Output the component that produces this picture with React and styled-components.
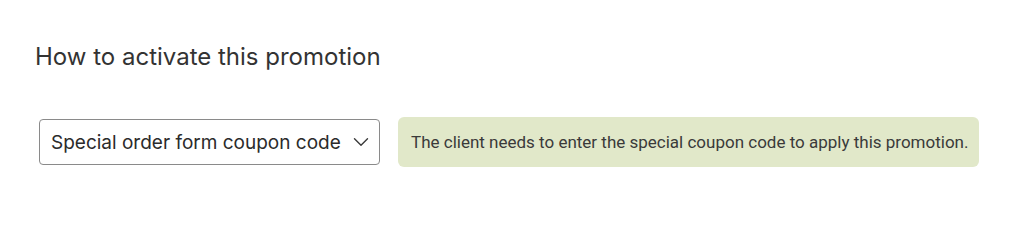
import React from "react";
import styled, { createGlobalStyle } from "styled-components";

const Global = createGlobalStyle`
  html, body { margin: 0; padding: 0; background: #ffffff; }
  body { font-family: Inter, "Noto Sans", sans-serif; }
`;

const Page = styled.div`
  padding: 42px 0 0 35px;
  height: 212px;
  box-sizing: border-box;
`;

const Heading = styled.h2`
  margin: 0;
  font-family: Inter, "Noto Sans", sans-serif;
  font-weight: 400;
  font-size: 24px;
  line-height: 30px;
  color: #333333;
`;

const Row = styled.div`
  display: flex;
  align-items: center;
  gap: 18px;
  margin-top: 45px;
  padding-left: 4px;
`;

const Select = styled.div`
  width: 341px;
  height: 46px;
  box-sizing: border-box;
  border: 1px solid #8a8a8a;
  border-radius: 4px;
  display: flex;
  align-items: center;
  justify-content: space-between;
  padding: 0 10px 0 11px;
  font-family: Inter, "Noto Sans", sans-serif;
  font-size: 19px;
  color: #2b2b2b;
  white-space: nowrap;
`;

const Chevron = styled.svg`
  width: 16px;
  height: 10px;
  flex: none;
`;

const Note = styled.div`
  width: 581px;
  height: 50px;
  box-sizing: border-box;
  background: #e1e8c9;
  border-radius: 6px;
  display: flex;
  align-items: center;
  padding: 0 13px;
  font-family: Roboto, "Noto Sans", sans-serif;
  font-size: 17px;
  color: #3a3a3a;
  white-space: nowrap;
`;

export default function App() {
  return (
    <>
      <Global />
      <Page>
        <Heading>How to activate this promotion</Heading>
        <Row>
          <Select>
            <span>Special order form coupon code</span>
            <Chevron viewBox="0 0 16 10" fill="none" stroke="#3a3a3a" strokeWidth="1.4" strokeLinecap="round" strokeLinejoin="round">
              <path d="M1.5 1.8L8 8.2L14.5 1.8" />
            </Chevron>
          </Select>
          <Note>The client needs to enter the special coupon code to apply this promotion.</Note>
        </Row>
      </Page>
    </>
  );
}
